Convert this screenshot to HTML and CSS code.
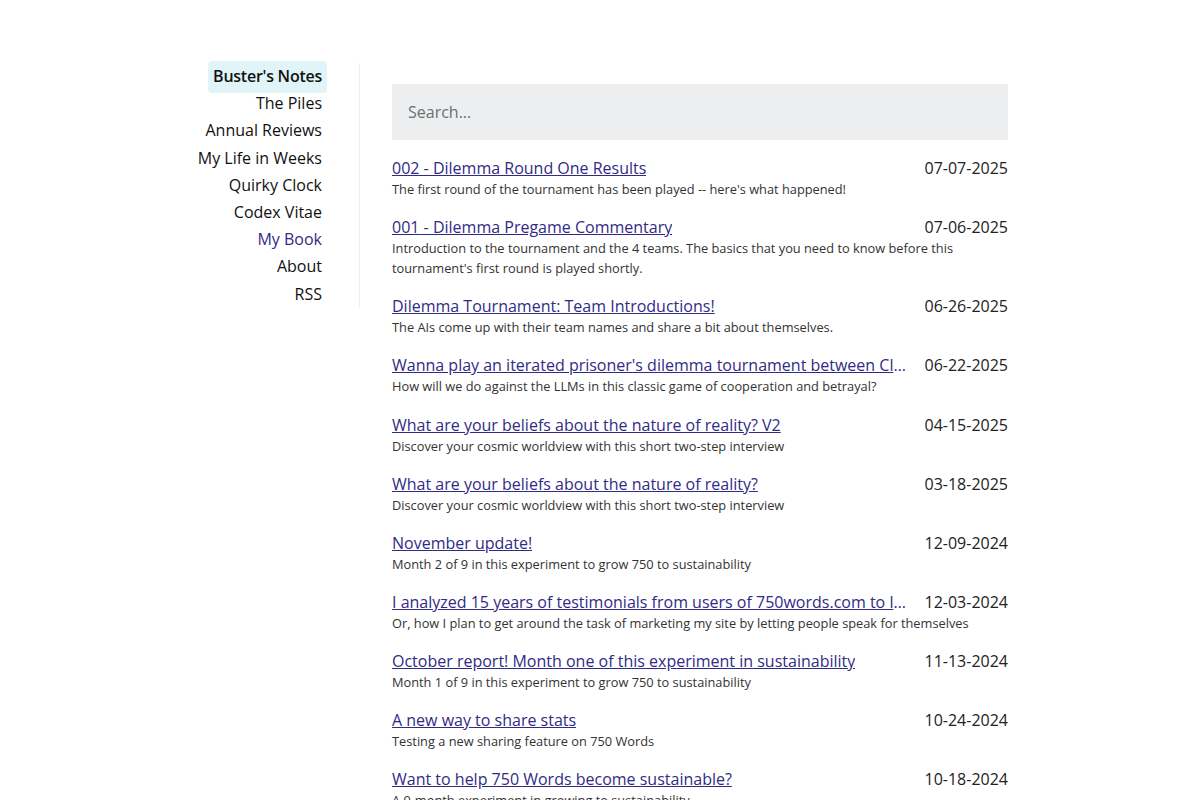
FILE: index.html
```html
<!DOCTYPE html>
<html lang="en">
<head>
  <meta charset="UTF-8">
  <meta name="viewport" content="width=device-width, initial-scale=1.0">
  <title>Buster's Notes</title>
  <link rel="stylesheet" href="styles.css">
</head>
<body>

  <div class="page">
    <!-- Left navigation -->
    <nav class="sidenav">
      <a href="#" class="current">Buster's Notes</a>
      <a href="#">The Piles</a>
      <a href="#">Annual Reviews</a>
      <a href="#">My Life in Weeks</a>
      <a href="#">Quirky Clock</a>
      <a href="#">Codex Vitae</a>
      <a href="#" class="book">My Book</a>
      <a href="#">About</a>
      <a href="#">RSS</a>
    </nav>

    <main class="content">
      <input type="text" class="search" placeholder="Search...">

      <ul class="posts">
        <li class="post">
          <div class="post-head">
            <a href="#" class="post-title">002 - Dilemma Round One Results</a>
            <span class="post-date">07-07-2025</span>
          </div>
          <p class="post-desc">The first round of the tournament has been played -- here's what happened!</p>
        </li>
        <li class="post">
          <div class="post-head">
            <a href="#" class="post-title">001 - Dilemma Pregame Commentary</a>
            <span class="post-date">07-06-2025</span>
          </div>
          <p class="post-desc">Introduction to the tournament and the 4 teams. The basics that you need to know before this tournament's first round is played shortly.</p>
        </li>
        <li class="post">
          <div class="post-head">
            <a href="#" class="post-title">Dilemma Tournament: Team Introductions!</a>
            <span class="post-date">06-26-2025</span>
          </div>
          <p class="post-desc">The AIs come up with their team names and share a bit about themselves.</p>
        </li>
        <li class="post">
          <div class="post-head">
            <a href="#" class="post-title">Wanna play an iterated prisoner's dilemma tournament between Claude, ChatGPT, Gemini and Grok?</a>
            <span class="post-date">06-22-2025</span>
          </div>
          <p class="post-desc">How will we do against the LLMs in this classic game of cooperation and betrayal?</p>
        </li>
        <li class="post">
          <div class="post-head">
            <a href="#" class="post-title">What are your beliefs about the nature of reality? V2</a>
            <span class="post-date">04-15-2025</span>
          </div>
          <p class="post-desc">Discover your cosmic worldview with this short two-step interview</p>
        </li>
        <li class="post">
          <div class="post-head">
            <a href="#" class="post-title">What are your beliefs about the nature of reality?</a>
            <span class="post-date">03-18-2025</span>
          </div>
          <p class="post-desc">Discover your cosmic worldview with this short two-step interview</p>
        </li>
        <li class="post">
          <div class="post-head">
            <a href="#" class="post-title">November update!</a>
            <span class="post-date">12-09-2024</span>
          </div>
          <p class="post-desc">Month 2 of 9 in this experiment to grow 750 to sustainability</p>
        </li>
        <li class="post">
          <div class="post-head">
            <a href="#" class="post-title">I analyzed 15 years of testimonials from users of 750words.com to learn what they love</a>
            <span class="post-date">12-03-2024</span>
          </div>
          <p class="post-desc">Or, how I plan to get around the task of marketing my site by letting people speak for themselves</p>
        </li>
        <li class="post">
          <div class="post-head">
            <a href="#" class="post-title">October report! Month one of this experiment in sustainability</a>
            <span class="post-date">11-13-2024</span>
          </div>
          <p class="post-desc">Month 1 of 9 in this experiment to grow 750 to sustainability</p>
        </li>
        <li class="post">
          <div class="post-head">
            <a href="#" class="post-title">A new way to share stats</a>
            <span class="post-date">10-24-2024</span>
          </div>
          <p class="post-desc">Testing a new sharing feature on 750 Words</p>
        </li>
        <li class="post">
          <div class="post-head">
            <a href="#" class="post-title">Want to help 750 Words become sustainable?</a>
            <span class="post-date">10-18-2024</span>
          </div>
          <p class="post-desc">A 9-month experiment in growing to sustainability</p>
        </li>
      </ul>
    </main>
  </div>

</body>
</html>
```

FILE: styles.css
```css
body {
  margin: 0;
  font-family: "Open Sans", "Noto Sans", Arial, sans-serif;
  color: #111;
  background: #fff;
}
.page {
  width: 816px;
  margin: 63px auto 0;
  display: flex;
  align-items: flex-start;
}
.sidenav {
  width: 168px;
  box-sizing: border-box;
  padding-right: 32px;
  border-right: 1px solid #eeeeee;
  display: flex;
  flex-direction: column;
  align-items: flex-end;
}
.sidenav a {
  display: block;
  padding: 0 5px;
  font-size: 16px;
  line-height: 27.2px;
  color: #111;
  text-decoration: none;
}
.sidenav a.current {
  font-weight: 600;
  letter-spacing: -0.25px;
  background-color: #e1f5f8;
  border-radius: 4px;
  padding-top: 2.5px;
  padding-bottom: 2.5px;
  margin: -2.5px 0;
}
.sidenav a.book {
  color: #312b86;
}
.content {
  flex: 1;
  min-width: 0;
  padding-left: 32px;
}
.search {
  display: block;
  width: 100%;
  box-sizing: border-box;
  height: 56px;
  margin-top: 21px;
  padding: 0 16px;
  border: none;
  background-color: #eceeef;
  font-family: inherit;
  font-size: 16px;
  color: #222;
}
.search::placeholder {
  color: #6c6f72;
}
.posts {
  list-style: none;
  margin: 17px 0 0;
  padding: 0;
}
.post {
  margin-bottom: 17.15px;
}
.post-head {
  display: flex;
  justify-content: space-between;
  gap: 18px;
  font-size: 16px;
  line-height: 22px;
}
.post-title {
  color: #312b86;
  white-space: nowrap;
  overflow: hidden;
  text-overflow: ellipsis;
  min-width: 0;
}
.post-date {
  flex-shrink: 0;
  color: #222;
}
.post-desc {
  margin: 0;
  font-size: 12.8px;
  line-height: 20px;
  color: #333;
}
```
